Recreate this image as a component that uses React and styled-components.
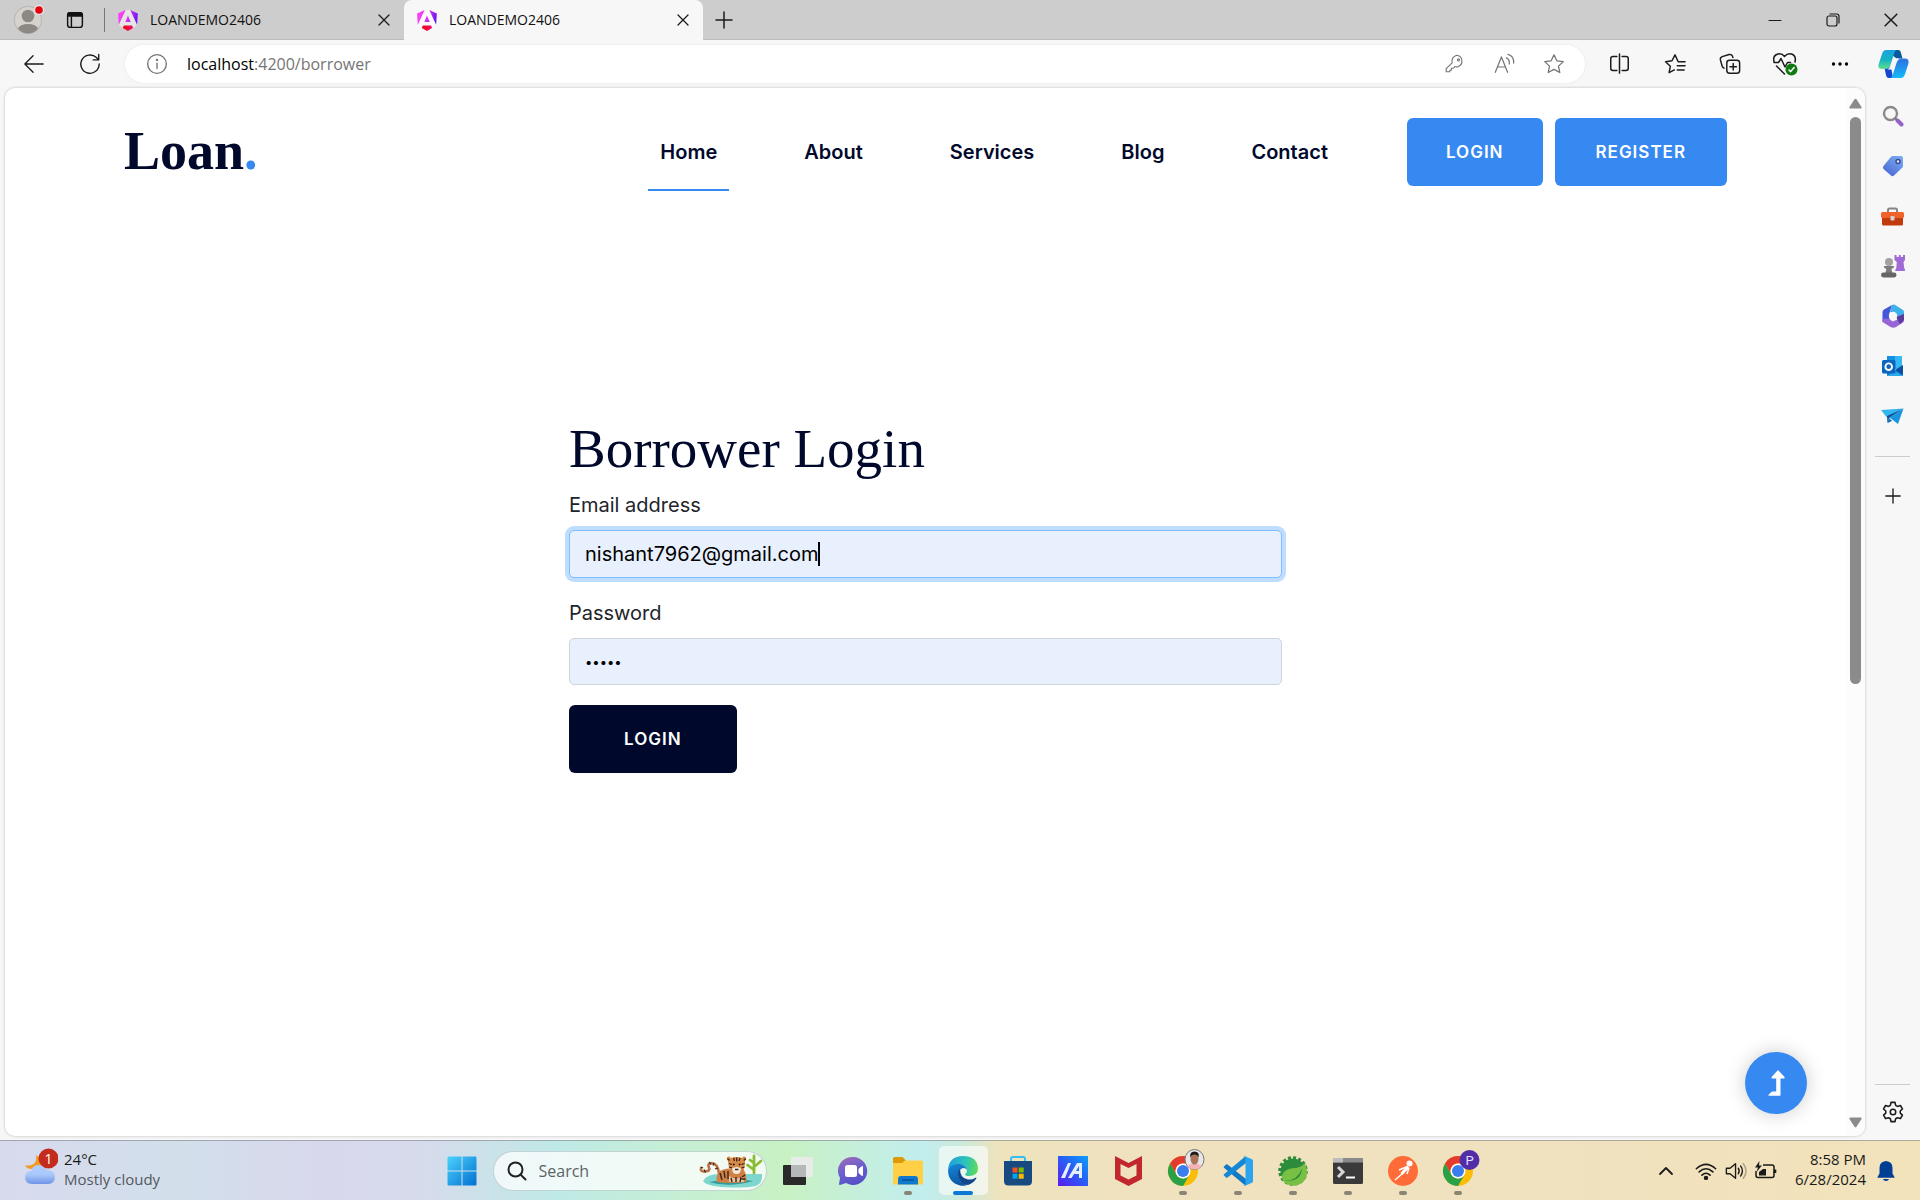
import React, { useState } from "react";
import styled, { createGlobalStyle, css } from "styled-components";

const uiFont = '"Open Sans", "Noto Sans", sans-serif';
const siteFont = 'Inter, "Liberation Sans", sans-serif';
const navy = "#00092b";
const blue = "#3789f2";

const GlobalStyle = createGlobalStyle`
  * { box-sizing: border-box; }
  body { margin: 0; background: #f7f7f7; font-family: ${uiFont}; }
  button { border: 0; padding: 0; background: none; font: inherit; color: inherit; cursor: pointer; }
  svg { display: block; flex: none; }
`;

const Desktop = styled.div`
  display: flex;
  flex-direction: column;
  height: 100vh;
  overflow: hidden;
`;

/* ---------- tab strip ---------- */
const TabStrip = styled.header`
  display: flex;
  height: 40px;
  background: #cdcdcd;
  box-shadow: inset 0 -1px 0 #bdbdbd;
`;
const StripTools = styled.div`
  display: flex;
  align-items: center;
  gap: 20px;
  width: 104px;
  padding-left: 14px;
`;
const Divider = styled.span`
  width: 1px;
  height: 24px;
  margin: 8px 0;
  background: #777;
`;
const Tab = styled.div`
  display: flex;
  align-items: center;
  gap: 12px;
  width: 299px;
  padding: 0 12px 0 13px;
  font-size: 14px;
  line-height: 20px;
  color: #111;
  border-radius: 8px 8px 0 0;
  background: ${(p) => (p.$active ? "#f7f7f7" : "transparent")};
`;
const TabTitle = styled.span`
  flex: 1;
`;
const IconButton = styled.button`
  display: flex;
  align-items: center;
  justify-content: center;
  width: ${(p) => p.$w || 40}px;
  height: ${(p) => p.$h || 40}px;
  color: ${(p) => p.$color || "#1b1b1b"};
`;
const WindowControls = styled.div`
  display: flex;
  margin-left: auto;
`;

/* ---------- toolbar ---------- */
const Toolbar = styled.div`
  display: flex;
  align-items: center;
  height: 47px;
  background: #f7f7f7;
`;
const NavButtons = styled.div`
  display: flex;
  width: 125px;
  padding-left: 6px;
`;
const AddressBar = styled.div`
  display: flex;
  flex: 1;
  align-items: center;
  height: 38px;
  padding: 0 6px 0 12px;
  background: #fff;
  border-radius: 19px;
  box-shadow: 0 0 3px rgba(0, 0, 0, 0.08);
`;
const Url = styled.div`
  flex: 1;
  padding-left: 10px;
  font-size: 16px;
  line-height: 24px;
  color: #757575;
  b { font-weight: 400; color: #000; }
`;
const ToolbarActions = styled.div`
  display: flex;
  padding-left: 7px;
`;

/* ---------- browser body ---------- */
const BrowserBody = styled.div`
  display: flex;
  flex: 1;
  min-height: 0;
  padding: 1px 0 4px 5px;
`;
const Viewport = styled.div`
  position: relative;
  display: flex;
  flex: 1;
  overflow: hidden;
  background: #fff;
  border-radius: 10px;
  box-shadow: 0 0 3px rgba(0, 0, 0, 0.25);
`;
const Page = styled.div`
  flex: 1;
  font-family: ${siteFont};
`;
const ScrollTrack = styled.div`
  display: flex;
  flex-direction: column;
  align-items: center;
  gap: 8px;
  width: 19px;
  padding: 10px 0 8px;
  background: #fcfcfc;
  svg:last-child { margin-top: auto; }
`;
const ScrollThumb = styled.div`
  width: 11px;
  height: 55%;
  border-radius: 6px;
  background: #8b8b8b;
`;
const EdgeSidebar = styled.aside`
  display: flex;
  flex-direction: column;
  align-items: center;
  width: 55px;
  padding-top: 3px;
`;
const SideRule = styled.hr`
  width: 35px;
  height: 1px;
  margin: ${(p) => p.$margin};
  border: 0;
  background: #ccc;
`;

/* ---------- site ---------- */
const SiteHeader = styled.header`
  display: flex;
  align-items: center;
  padding: 30px 119px;
`;
const Brand = styled.a`
  padding-bottom: 2px;
  font: 700 54px/60px "Liberation Serif", serif;
  color: ${navy};
  text-decoration: none;
  span { color: ${blue}; }
`;
const SiteNav = styled.nav`
  display: flex;
  gap: 63px;
  margin-left: auto;
  margin-right: 67px;
`;
const NavLink = styled.a`
  position: relative;
  padding: 0 12px;
  font-size: 20px;
  font-weight: 600;
  line-height: 68px;
  color: ${navy};
  text-decoration: none;
  ${(p) => p.$active && css`
    &::after {
      content: "";
      position: absolute;
      left: 0;
      right: 0;
      bottom: -5px;
      height: 2px;
      background: ${blue};
    }
  `}
`;
const SiteButton = styled.button`
  height: 68px;
  padding: 0 ${(p) => p.$pad}px;
  border-radius: 6px;
  background: ${(p) => (p.$dark ? navy : blue)};
  color: #fff;
  font-family: ${siteFont};
  font-size: 17px;
  font-weight: 600;
  letter-spacing: 1px;
`;
const HeaderActions = styled.div`
  display: flex;
  gap: 12px;
`;
const LoginForm = styled.form`
  display: flex;
  flex-direction: column;
  align-items: stretch;
  max-width: 713px;
  margin: 203px auto 0;
  ${SiteButton} { align-self: flex-start; }
`;
const Title = styled.h1`
  margin: 0 0 11px;
  font: 400 55px/60px "Liberation Serif", serif;
  color: ${navy};
`;
const Field = styled.div`
  position: relative;
  display: flex;
  flex-direction: column;
  gap: 10px;
  margin-bottom: 20px;
`;
const Label = styled.label`
  font-size: 20px;
  line-height: 30px;
  color: #212529;
`;
const Input = styled.input`
  height: ${(p) => (p.$focused ? 48 : 47)}px;
  padding: 0 15px;
  border: 1px solid ${(p) => (p.$focused ? "#80bdff" : "#ced4da")};
  border-radius: 5px;
  outline: 0;
  background: #e8f0fe;
  box-shadow: ${(p) => (p.$focused ? "0 0 0 4px #bfdeff" : "none")};
  font-family: ${siteFont};
  font-size: ${(p) => (p.type === "password" ? 13 : 20)}px;
  color: #000;
`;
const Caret = styled.span`
  position: absolute;
  left: 249px;
  bottom: 12px;
  width: 2px;
  height: 24px;
  background: #000;
`;
const ToTop = styled.button`
  position: absolute;
  right: 58px;
  bottom: 22px;
  display: grid;
  place-items: center;
  width: 62px;
  height: 62px;
  border-radius: 50%;
  background: ${blue};
  box-shadow: 0 0 20px rgba(0, 0, 0, 0.2);
`;

/* ---------- taskbar ---------- */
const TaskbarRoot = styled.footer`
  display: grid;
  grid-template-columns: 1fr auto 1fr;
  align-items: center;
  height: 60px;
  border-top: 1px solid rgba(120, 120, 130, 0.55);
  background: linear-gradient(90deg, #d7daed 0%, #d2dfeb 9%, #d8d8ec 17%, #d6dbec 22%, #bfe9e6 29%,
    #c6efd2 36%, #c8f1c4 41%, #c5efdc 45%, #c1eeee 48%, #cbe9dc 50%, #eee3bd 52%, #f0e1bf 60%, #f0e1bf 80%, #f3e3bb 100%);
`;
const Weather = styled.button`
  display: flex;
  align-items: center;
  gap: 6px;
  margin-left: 24px;
  justify-self: start;
  text-align: left;
`;
const WeatherText = styled.span`
  padding-bottom: 4px;
  font-size: 15px;
  line-height: 20px;
  color: #1a1a1a;
  small { display: block; font-size: 15px; color: #55585e; }
`;
const Apps = styled.div`
  display: flex;
  align-items: center;
`;
const AppButton = styled.button`
  position: relative;
  display: grid;
  place-items: center;
  width: 49px;
  height: 49px;
  margin: 0 3px;
  border-radius: 5px;
  background: ${(p) => (p.$active ? "rgba(255,255,255,0.6)" : "transparent")};
  ${(p) => p.$running && css`
    &::after {
      content: "";
      position: absolute;
      bottom: 0;
      width: ${p.$active ? 20 : 8}px;
      height: 4px;
      border-radius: 2px;
      background: ${p.$active ? "#0a78d4" : "#8a8474"};
    }
  `}
`;
const SearchPill = styled.label`
  display: flex;
  align-items: center;
  gap: 12px;
  width: 274px;
  height: 40px;
  margin: 0 4px 0 3px;
  padding: 0 3px 0 13px;
  border: 1px solid rgba(110, 140, 140, 0.35);
  border-radius: 20px;
  background: rgba(255, 255, 255, 0.75);
  overflow: hidden;
`;
const SearchInput = styled.input`
  flex: 1;
  min-width: 0;
  padding: 0;
  border: 0;
  outline: 0;
  background: none;
  font: 16px/24px ${uiFont};
  &::placeholder { color: #5c6264; opacity: 1; }
`;
const Tray = styled.div`
  display: flex;
  align-items: center;
  justify-self: end;
  padding-right: 24px;
`;
const Clock = styled.time`
  width: 83px;
  margin: 0 10px 0 2px;
  padding-bottom: 4px;
  font-size: 15px;
  line-height: 20px;
  text-align: right;
  color: #1a1a1a;
`;

/* ---------- icons ---------- */
const Line = ({ size = 22, w = 1.5, vb = 24, children, ...rest }) => (
  <svg width={size} height={size} viewBox={`0 0 ${vb} ${vb}`} fill="none" stroke="currentColor"
    strokeWidth={w} strokeLinecap="round" strokeLinejoin="round" {...rest}>{children}</svg>
);

const AvatarIcon = () => (
  <svg width="32" height="32" viewBox="0 0 32 32">
    <circle cx="14" cy="16" r="14" fill="#b9b6b2" />
    <circle cx="14" cy="16" r="13" fill="#d6d3ce" />
    <circle cx="14" cy="12" r="6.300" fill="#8c8883" />
    <path d="M4 24.500Q6 20 14 20t10 4.500q-4 5-10 5t-10-5" fill="#8c8883" />
    <circle cx="25" cy="6" r="5" fill="#e8e8e8" />
    <circle cx="25" cy="6" r="3.800" fill="#e3000f" />
  </svg>
);
const WorkspacesIcon = () => (
  <svg width="18" height="18" viewBox="0 0 20 20" fill="none" stroke="#111" strokeWidth="1.6">
    <rect x="1.800" y="1.800" width="16.400" height="16.400" rx="3" />
    <path d="M2 4q0-2 2.500-2h11q2.500 0 2.500 2v1.500H2z" fill="#111" />
    <path d="M6 6v12" />
  </svg>
);
const AngularIcon = () => (
  <svg width="20" height="21" viewBox="0 0 223 236">
    <defs>
      <linearGradient id="ngA" x1="0" y1=".3" x2="1" y2=".5">
        <stop offset="0" stopColor="#ff41f8" /><stop offset=".5" stopColor="#e035f0" /><stop offset="1" stopColor="#6a14f5" />
      </linearGradient>
      <linearGradient id="ngB" x1="0" y1="0" x2="1" y2="0">
        <stop offset="0" stopColor="#f0060b" /><stop offset="1" stopColor="#f50a70" />
      </linearGradient>
    </defs>
    <path fill="#fff" opacity=".5" d="M84 0h54l77 165-46 37-58 33-58-33-45-37z" />
    <path fill="url(#ngA)" d="m222 39-8 126L137 0zM111 63l30 73H81zM8 165 0 39 85 0z" />
    <path fill="url(#ngB)" d="m169 202-58 33-58-33 12-29h92z" />
  </svg>
);
const CloseIcon = ({ size = 12 }) => <Line size={size} vb={12} w={1.3}><path d="M1 1l10 10M11 1L1 11" /></Line>;
const PlusIcon = ({ size = 18 }) => <Line size={size} vb={18} w={1.5}><path d="M9 1v16M1 9h16" /></Line>;
const MinIcon = () => <Line size={14} vb={14} w={1}><path d="M1 7.500h12" /></Line>;
const RestoreIcon = () => (
  <Line size={14} vb={14} w={1.2}><rect x="1" y="3" width="10" height="10" rx="2" /><path d="M4 1h6.500q2.500 0 2.500 2.500V10" /></Line>
);
const BackIcon = () => <Line w={1.4}><path d="M22 12H2.500M11 3l-9 9 9 9" /></Line>;
const RefreshIcon = () => <Line w={1.5}><path d="M22 12a10 10 0 1 1-3-7L21.500 7.500M21.500 1.500v6h-6" /></Line>;
const InfoIcon = () => <Line w={1.5}><circle cx="12" cy="12" r="10.200" /><path d="M12 11v6" /><circle cx="12" cy="7.500" r=".6" fill="currentColor" /></Line>;
const KeyIcon = () => (
  <Line size={19} w={1.4}><path d="M14.500 1.500a7.500 7.500 0 0 1 2 14.500q-2 .7-4-.2L10.500 18H8v2.500H6V22.500H1.500V18.500L9 11.200q-1.500-7 5.500-9.700z" /><circle cx="17" cy="7.500" r="1.300" /></Line>
);
const ReadAloudIcon = () => (
  <Line size={21} w={1.4}><path d="M1.500 22L8.500 4.500 15.500 22M4 16h9M14 5.500q4 1.500 3.500 7M16 1.500q7 2 6.500 10" /></Line>
);
const StarIcon = () => <Line size={22} w={1.4}><path d="M12 2l3.100 6.500 7 .9-5.200 4.900 1.400 7L12 17.900l-6.300 3.400 1.400-7L1.900 9.400l7-.9z" /></Line>;
const SplitIcon = () => <Line w={1.7} size={21}><path d="M9 4H4.500Q2 4 2 6.500v11Q2 20 4.500 20H9M15 4h4.500Q22 4 22 6.500v11q0 2.500-2.500 2.500H15M12 1v22" /></Line>;
const FavoritesIcon = () => <Line w={1.6}><path d="M15.500 9.500L12 2 8.700 8.500l-7 1 5.200 5-1.300 7 5.700-3M14.500 14H23M14.500 18.500H22M15.500 9.500H23" /></Line>;
const CollectionsIcon = () => (
  <Line w={1.6}><rect x="8.500" y="8" width="14" height="14" rx="3" /><path d="M15.500 11.500v7M12 15h7M5.500 16.500Q4 16 3.500 14.500L1.500 7.500Q1 5 3.500 4L11 1.700q2.500-.7 3.500 1.300l.7 2" /></Line>
);
const HealthIcon = () => (
  <svg width="26" height="26" viewBox="0 0 26 26" fill="none" stroke="#1b1b1b" strokeWidth="1.5" strokeLinejoin="round" strokeLinecap="round">
    <path d="M2 10.500Q.5 4.500 6 3q4-.8 6.500 2.500Q15.500 2 19.500 3q5 1.500 3.500 8M4.500 15l8 8M2 11.500h4.500L9 7.500l4 8.500 2.500-4.500h3" />
    <circle cx="19.500" cy="18.500" r="6" fill="#0f7b10" stroke="none" />
    <path d="M17 19l1.700 1.600 3.400-4" stroke="#fff" />
  </svg>
);
const DotsIcon = () => (
  <svg width="18" height="6" viewBox="0 0 18 6"><circle cx="2.500" cy="3" r="1.700" /><circle cx="9" cy="3" r="1.700" /><circle cx="15.500" cy="3" r="1.700" /></svg>
);
const CopilotIcon = () => (
  <svg width="31" height="30" viewBox="0 0 31 30">
    <defs>
      <linearGradient id="cpA" x1="0" y1="0" x2="0" y2="1"><stop offset="0" stopColor="#1aa3e0" /><stop offset=".5" stopColor="#15b2c4" /><stop offset="1" stopColor="#5fe08a" /></linearGradient>
      <linearGradient id="cpB" x1="0" y1="0" x2="0" y2="1"><stop offset="0" stopColor="#2f6fe0" /><stop offset="1" stopColor="#12baf8" /></linearGradient>
    </defs>
    <path d="M16 1h4q2.500 0 3 3l1.500 5.500h-6L14 6z" fill="#0a5a9c" />
    <path d="M8 1h11q-2 0-3 4l-3.500 11q-1.500 4-5 4H4Q-.8 20 .7 15L4 5Q5.300 1 8 1z" fill="url(#cpA)" />
    <path d="M15 29h-4q-2.500 0-3-3l-1.300-6q4.300 0 6-4z" fill="#1747d1" />
    <path d="M23 29H12q2 0 3-4l3.500-11q1.500-4.500 5-4.500H27q4.500 0 3.300 5.500L27 25q-1.300 4-4 4z" fill="url(#cpB)" />
    <path d="M15.500 10.500q.5-1 1.500-1h4q-2.500 1-3.500 4l-1.800 5.500q-.7 1.500-2 1.500H9.500q2-1 3-4z" fill="#f7f7f7" />
  </svg>
);
const SideSearch = () => (
  <svg width="22" height="22" viewBox="0 0 22 22" fill="none"><circle cx="8.500" cy="8.500" r="6.500" stroke="#8a8a8a" strokeWidth="2.400" /><path d="M13 13l2 2" stroke="#777" strokeWidth="2" /><path d="M15.500 15.500l4 4" stroke="#9462c9" strokeWidth="4" strokeLinecap="round" /></svg>
);
const TagIcon = () => (
  <svg width="22" height="22" viewBox="0 0 22 22"><defs><linearGradient id="tg" x1="1" y1="0" x2=".3" y2="1"><stop stopColor="#7fb0f5" /><stop offset="1" stopColor="#4a6bd4" /></linearGradient></defs>
    <path d="M11 1h8q2 0 2 2v8q0 1-.8 1.800L12 20.500q-1.500 1.300-3 0L1.500 14q-1.300-1.500 0-3L9 1.800Q10 1 11 1z" fill="url(#tg)" /><circle cx="16" cy="6.500" r="2" fill="#dfe9ff" stroke="#3a4a94" strokeWidth="1.500" /></svg>
);
const ToolboxIcon = () => (
  <svg width="23" height="19" viewBox="0 0 23 19"><path d="M7 6V3q0-1.500 1.500-1.500h6Q16 1.500 16 3v3" fill="none" stroke="#858585" strokeWidth="2" /><rect x="1" y="9" width="21" height="9.500" rx="1.500" fill="#c23b0c" /><rect x="0" y="5" width="23" height="6" rx="1.500" fill="#f0622a" /><rect x="9.500" y="9" width="4" height="4.500" rx="1.200" fill="#d3d3d3" /></svg>
);
const GamesIcon = () => (
  <svg width="24" height="24" viewBox="0 0 24 24"><path d="M13.500 1h2v2h2.300V1h2v2h2.200V1H24v5l-1.500 2 .7 6q.8.500.8 3h-9.700q0-2.500 1-3l.5-6-2.300-2z" fill="#a06bd6" /><circle cx="8" cy="8" r="4" fill="#a2a2a2" /><path d="M3 12h10v1.500L10.500 15l.8 4H4.500l.8-4L3 13.500z" fill="#7d7d7d" /><rect x="0" y="18.500" width="15.500" height="5" rx="2.400" fill="#666" /></svg>
);
const OfficeIcon = () => (
  <svg width="22" height="24" viewBox="0 0 22 24"><path d="M10 1Q12 0 14 1.500L21 6q1 .7 1 2v8L14.500 13V9.500L8 8z" fill="#3fb1ea" /><path d="M10 1L2 5.500Q.5 6.500.5 8v10l7-3V9z" fill="#4359d8" /><path d="M.5 15v3l8 5q3 1.500 5.500 0l7-4.500q1-.8 1-2.500v-4l-7.500 4-4 1.500L7 14.500z" fill="#9765d5" /><path d="M14 13l8-3v6l-4 4z" fill="#5a3b9c" /><circle cx="11" cy="12" r="4.200" fill="#f7f7f7" /></svg>
);
const OutlookIcon = () => (
  <svg width="22" height="22" viewBox="0 0 22 22"><rect x="5" y="1" width="15" height="13" rx="1" fill="#35b8f1" /><path d="M5 1h8v6H5z" fill="#1591df" /><path d="M5 12l8 4 8-5v9q0 1-1 1H6q-1 0-1-1z" fill="#1479cd" /><path d="M13 15l8-5v10z" fill="#0a4fa0" /><path d="M5 21l8-5 8 5z" fill="#27a9ea" /><rect x="0" y="5" width="13.500" height="13.500" rx="1.500" fill="#0a66c0" /><circle cx="6.700" cy="11.700" r="3.300" fill="none" stroke="#fff" strokeWidth="1.900" /></svg>
);
const TelegramIcon = () => (
  <svg width="23" height="17" viewBox="0 0 23 17"><path d="M0 2L22.500.5 5.500 9z" fill="#35b5ee" /><path d="M6 8L22.500.5 8 10l-1.500 5z" fill="#0b4f94" /><path d="M8.500 9.500L22.500.5 17 16z" fill="#1995e0" /><path d="M6.500 15L8 10l3 3z" fill="#0e6bb8" /></svg>
);
const GearIcon = () => (
  <Line size={22} w={1.7}><path d="M9.800 1.500h4.400l.7 3.200 2 1.200 3.200-1 2.200 3.800-2.400 2.200v2.300l2.400 2.200-2.200 3.800-3.200-1-2 1.200-.7 3.100H9.800l-.7-3.100-2-1.200-3.200 1-2.200-3.800 2.400-2.200v-2.300L1.700 8.700l2.200-3.800 3.200 1 2-1.200z" /><circle cx="12" cy="12" r="3" /></Line>
);
const Triangle = ({ down }) => (
  <svg width="13" height="11" viewBox="0 0 13 11"><path d={down ? "M1 .5h11q1 .5.500 1.500L7.500 9.800q-1 1-2 0L.5 2Q0 1 1 .5z" : "M1 10.500h11q1-.5.500-1.500L7.500 1.200q-1-1-2 0L.5 9q-.5 1 .5 1.500z"} fill="#8b8b8b" /></svg>
);
const LevelUpIcon = () => (
  <svg width="17" height="26" viewBox="0 0 17 26" fill="#fff"><path d="M9.500.5q.5-.6 1 0l6 6.500q.7 1.500-.8 1.500h-3.200V25q0 .7-.7.7H1Q0 25.500.7 24.600L3.500 22q.4-.5 1-.5h3.700v-13H4.500Q3 8.500 3.700 7z" /></svg>
);
const WeatherIcon = () => (
  <svg width="34" height="46" viewBox="0 0 34 46">
    <defs><linearGradient id="wc" x1="0" y1="0" x2="0" y2="1"><stop stopColor="#b5cdfa" /><stop offset=".5" stopColor="#a9c8fb" /><stop offset="1" stopColor="#6f94e6" /></linearGradient></defs>
    <path d="M12 7q8 4 4 14H8Q3 21 1 17.500q13 1 11-10.500z" fill="#f29b24" />
    <path d="M8 36Q1 35.500 1 29.500T7.500 23Q8 17 15 17q6 0 8 5 8 .5 8 7t-7 7z" fill="url(#wc)" />
    <circle cx="24.500" cy="10.500" r="10" fill="#c42b1c" />
    <text x="24.500" y="15.500" textAnchor="middle" fontSize="14" fill="#fff" fontFamily="Open Sans, sans-serif">1</text>
  </svg>
);
const StartIcon = () => (
  <svg width="30" height="30" viewBox="0 0 30 30"><defs><linearGradient id="st" x1="0" y1="0" x2="1" y2="1"><stop stopColor="#4cd2fd" /><stop offset="1" stopColor="#0070d0" /></linearGradient></defs>
    <path d="M1.500.5h13v14H.5v-13q0-1 1-1zM15.500.5h13q1 0 1 1v13h-14zM.5 15.500h14v14h-13q-1 0-1-1zM15.500 15.500h14v13q0 1-1 1h-13z" fill="url(#st)" /></svg>
);
const TaskSearchIcon = () => <svg width="20" height="20" viewBox="0 0 20 20" fill="none" stroke="#222" strokeWidth="2"><circle cx="8.500" cy="8.500" r="7" /><path d="M13.500 13.500l5 5" strokeLinecap="round" /></svg>;
const TigerArt = () => (
  <svg width="64" height="34" viewBox="0 0 64 34">
    <path d="M4 27q4-7 16-7h43q1 9-6 12-10 2-24 1.500Q8 33 4 27z" fill="#7ed6cf" />
    <path d="M10 28q20 6 44-1-20-4-44 1z" fill="#2f9a9c" />
    <path d="M20 20q-1-11-8-11-4 1-2 4.500t-4 4q-5 .5-4-3.500" fill="none" stroke="#bd7044" strokeWidth="2.600" strokeLinecap="round" />
    <path d="M10 8l2 2.500M5 15.500l1.500 3M15 9l-1 2.500M19 14l-3 1M2 13l2 1" stroke="#3b2418" strokeWidth="1.200" />
    <path d="M17.500 28q-1-11 7-12.500 7-1.500 11-1.500h8q4 4 4 14-15 2-30 0z" fill="#cf8145" />
    <path d="M30 22q7 5 14 0l1 6H30z" fill="#e6c3a0" />
    <path d="M21 19l2 7M25 17l1 7M29 17v8M32 24l1 4M37 23v5M42 23l-1 5M46 21l-3 2M46.500 25h-4" stroke="#3b2418" strokeWidth="1.400" />
    <path d="M28 3.500q2-2 4 .5l3-1h5l3 1q2-2.500 4-.5.800 2-1 3.500.5 7-3 10.500l-5 3-5-3q-4-3-4-10.500-1.800-1.500-1-3.500z" fill="#d98b4a" />
    <path d="M33 14.500q4.500-3 9 0l-1 4q-3.500 3-7 0z" fill="#f3e9df" />
    <path d="M30 9.500l3 1M30 13l3 1M45.500 9.500l-3 1M45.500 13l-3 1M37.700 3.500v4M34.500 4l1 3M41 4l-1 3M28.500 4.500l2 2M46.800 4.500l-2 2M36 15.500h3.400" stroke="#3b2418" strokeWidth="1.300" />
    <circle cx="34.800" cy="10.500" r="1" fill="#1c1c1c" /><circle cx="40.600" cy="10.500" r="1" fill="#1c1c1c" />
    <path d="M55 19V2M54.500 15.500L48.500 11M55 13l7-6M55 9l-4-3" fill="none" stroke="#8cbc35" strokeWidth="2.800" strokeLinecap="round" />
  </svg>
);
const TaskViewIcon = () => (
  <svg width="30" height="28" viewBox="0 0 30 28"><rect x="0" y="8" width="23" height="20" rx="1" fill="#292929" /><rect x="8" y="0" width="22" height="20" rx="1" fill="#e9ecec" opacity=".92" /><rect x="8" y="8" width="15" height="12" fill="#b5b8b8" /></svg>
);
const ChatIcon = () => (
  <svg width="30" height="30" viewBox="0 0 30 30"><defs><linearGradient id="ch" x1=".2" y1="0" x2=".6" y2="1"><stop stopColor="#9c6bb5" /><stop offset=".5" stopColor="#6a5fd0" /><stop offset="1" stopColor="#5350c4" /></linearGradient></defs>
    <path d="M15 1a14 14 0 1 1-7 26l-6 2q-1 0-1-1l1-6A14 14 0 0 1 15 1z" fill="url(#ch)" /><rect x="7" y="9" width="12" height="12" rx="2.500" fill="#fff" /><path d="M20.500 13l3.500-3q1 0 1 1v8q0 1-1 1l-3.500-3z" fill="#fff" /></svg>
);
const FolderIcon = () => (
  <svg width="30" height="28" viewBox="0 0 30 28"><path d="M0 1.500Q0 0 1.500 0h8L13 3.500 9.500 8H0z" fill="#dc9a06" /><path d="M12 3.500h16.500q1.500 0 1.500 1.500v21q0 1.500-1.500 1.500h-27Q0 27.500 0 26V6h9z" fill="#ffcf45" /><path d="M5 27.500V22q0-3 3-3h14q3 0 3 3v5.500z" fill="#0d7ad0" /><path d="M9 23h12" stroke="#0a4f96" strokeWidth="1.500" /></svg>
);
const EdgeIcon = () => (
  <svg width="30" height="30" viewBox="0 0 30 30">
    <defs>
      <linearGradient id="edA" x1="0" y1=".3" x2="1" y2=".4"><stop stopColor="#1e9de0" /><stop offset=".6" stopColor="#2cc4b8" /><stop offset="1" stopColor="#5edb57" /></linearGradient>
      <linearGradient id="edB" x1="0" y1="0" x2=".3" y2="1"><stop stopColor="#1787d8" /><stop offset="1" stopColor="#0c59a6" /></linearGradient>
    </defs>
    <path d="M0 14Q1 0 15 0q14 0 15 12 0 8-9 8-4 0-4-2 2-1 2-4-1-5-7-5Q4 8 0 14z" fill="url(#edA)" />
    <path d="M0 14Q3 7.500 11 8q7 1 8 6-1-2-4-2-5 2-4.500 8Q12 28 19 29q-3 1.200-6 .7Q0 27 0 14z" fill="url(#edB)" />
    <path d="M12 13q-2.500 2-2 6.500Q12 29 20 29q6-2 8.500-7-.2-.8-1-.3Q24 24 20 23.500 12 22.500 12 13z" fill="#12478c" />
  </svg>
);
const StoreIcon = () => (
  <svg width="30" height="30" viewBox="0 0 30 30"><path d="M8 6V3q0-2 2-2h10q2 0 2 2v3" fill="none" stroke="#35bdf2" strokeWidth="2" /><path d="M1 5h28v20q0 4.500-4.500 4.500h-19Q1 29.500 1 25z" fill="#164a80" /><path d="M9.500 11.500h5v5h-5z" fill="#f25022" /><path d="M15.700 11.500h5v5h-5z" fill="#7fba00" /><path d="M9.500 17.700h5v5h-5z" fill="#00a4ef" /><path d="M15.700 17.700h5v5h-5z" fill="#ffb900" /></svg>
);
const MyAsusIcon = () => (
  <svg width="30" height="30" viewBox="0 0 30 30"><defs><linearGradient id="as" x1="1" y1="0" x2="0" y2="1"><stop stopColor="#0aa0fa" /><stop offset=".5" stopColor="#2b5af5" /><stop offset="1" stopColor="#5a1cf0" /></linearGradient></defs>
    <rect width="30" height="30" fill="url(#as)" /><path d="M3 22L10 7h3L7 22zM10 22L19 7h5v15h-3v-4h-5l-2.500 4zM18 15h3v-5z" fill="#e6efff" fillRule="evenodd" /></svg>
);
const McAfeeIcon = () => <svg width="27" height="30" viewBox="0 0 27 30"><path d="M0 0l13.500 7L27 0v23l-13.500 7L0 23zM5.500 8v11.500l8 4 8-4V8l-8 4z" fill="#c1272d" fillRule="evenodd" /></svg>;
const ChromeIcon = ({ children }) => (
  <svg width="44" height="44" viewBox="-7 0 44 44">
    <circle cx="15" cy="22" r="15" fill="#fbbd05" />
    <path d="M2 14.500A15 15 0 0 1 28 14.500H15A7.500 7.500 0 0 0 8.500 25.800z" fill="#e33b2e" />
    <path d="M2 14.500l6.500 11.300A7.500 7.500 0 0 0 21.500 25.800L15 37A15 15 0 0 1 2 14.500z" fill="#2aa147" />
    <circle cx="15" cy="22" r="7.500" fill="#fff" /><circle cx="15" cy="22" r="6" fill="#3a7dee" />
    {children}
  </svg>
);
const FaceBadge = () => (
  <g><ellipse cx="26.500" cy="10.500" rx="9.500" ry="10" fill="#e7e7ea" stroke="#777" /><path d="M19.500 17.500q2-3 7-3t7 3q-3 3-7 3t-7-3z" fill="#f4b3b8" /><ellipse cx="26.500" cy="10" rx="4" ry="5.500" fill="#a9745a" /><path d="M22.300 8.500q-1-6 4.200-6t4.200 6q-1.200-3-4.200-3t-4.200 3z" fill="#1e1a1a" /></g>
);
const LetterBadge = () => (
  <g><circle cx="26.500" cy="11" r="10" fill="#512da8" /><text x="26.500" y="15.500" textAnchor="middle" fontSize="13" fontFamily="Roboto, sans-serif" fill="#e9ddff">P</text></g>
);
const VsCodeIcon = () => (
  <svg width="30" height="30" viewBox="0 0 30 30"><path d="M1 10.500l2-2q.8-.5 1.500 0L23 23v6q-1 .5-2-.5L1 11.800q-.7-.6 0-1.300z" fill="#1479c4" /><path d="M1 19.500l2 2q.8.5 1.500 0L23 7V1q-1-.5-2 .5L1 18.200q-.7.600 0 1.300z" fill="#1488d4" /><path d="M22 .3l7 3q1 .5 1 1.700v20q0 1.200-1 1.700l-7 3q-1 0-1.500-.8L22.500 28V2l-2-1q.5-.8 1.500-.7z" fill="#2ba4f0" /></svg>
);
const SpringIcon = () => (
  <svg width="30" height="30" viewBox="0 0 30 30"><circle cx="15" cy="15" r="12.500" fill="#2c8c3c" /><circle cx="15" cy="15" r="13.300" fill="none" stroke="#2c8c3c" strokeWidth="3" strokeDasharray="3 2.200" /><path d="M27 7q5 12-2 19-9 7-18 1Q1 21 6 16q4-4 12-4 6-1 9-5z" fill="#77c043" /><path d="M6 24.500q13 1 18-12-1 14-18 12z" fill="#2c8c3c" /></svg>
);
const TerminalIcon = () => (
  <svg width="30" height="26" viewBox="0 0 30 26"><rect width="30" height="26" rx="1.500" fill="#3a3a3a" /><path d="M1.500 0h27Q30 0 30 1.500V4.500H0V1.500Q0 0 1.500 0z" fill="#8a8a8a" /><path d="M0 0h10v4.500H0z" fill="#bdbdbd" /><path d="M5 9l5 5-5 5" fill="none" stroke="#d6d6d6" strokeWidth="3" /><path d="M13 19.500h9" stroke="#fff" strokeWidth="2" /></svg>
);
const PostmanIcon = () => (
  <svg width="30" height="30" viewBox="0 0 30 30"><circle cx="15" cy="15" r="15" fill="#ff6c37" /><circle cx="21.500" cy="7.500" r="3" fill="#fff" /><path d="M19 9.500l2.500 2.500-7 7-2-2z" fill="#fff" /><path d="M18 11L11 14M14 18l-7 6M21 12l-2 6" stroke="#fff" strokeWidth="1.400" /></svg>
);
const ChevronUp = () => <Line size={16} vb={16} w={1.800}><path d="M2 11l6-6 6 6" /></Line>;
const WifiIcon = () => (
  <Line size={22} w={1.700}><path d="M1.500 9.500Q12 0 22.500 9.500M4.500 13q7.500-7 15 0M7.500 16.500q4.500-4 9 0" /><circle cx="12" cy="19.500" r="1.600" fill="currentColor" /></Line>
);
const VolumeIcon = () => (
  <Line size={22} w={1.500}><path d="M1.500 9v6h4l6 5V4l-6 5zM14.500 9q2 3 0 6M17 6.500q4 5.500 0 11" /><path d="M20 4q6 8 0 16" opacity=".35" /></Line>
);
const BatteryIcon = () => (
  <svg width="22" height="20" viewBox="0 0 22 20" fill="none" stroke="#1a1a1a" strokeWidth="1.500"><path d="M8 4h9q2 0 2 2v8.500q0 2-2 2H3q-2 0-2-2V10" /><path d="M20 8.500v3.500" strokeWidth="2.600" /><path d="M4 14.500V11l4-3h3v6.500z" fill="#1a1a1a" stroke="none" /><path d="M4.500 0L0 6.500h3L1.500 11 7 4.500H4z" fill="#1a1a1a" stroke="none" /></svg>
);
const BellIcon = () => (
  <svg width="18" height="20" viewBox="0 0 18 20" fill="#003f94"><path d="M9 0q6.500.5 6.500 7v5.500L17.500 16v.8H.5V16l2-3.500V7Q2.500.5 9 0zM6 18h6q-.5 2-3 2t-3-2z" /></svg>
);

const tabs = [{ id: 1, active: false }, { id: 2, active: true }];
const navItems = ["Home", "About", "Services", "Blog", "Contact"];
const sideApps = [
  ["Search", SideSearch], ["Shopping", TagIcon], ["Tools", ToolboxIcon], ["Games", GamesIcon],
  ["Microsoft 365", OfficeIcon], ["Outlook", OutlookIcon], ["Telegram", TelegramIcon],
];
const taskApps = [
  { name: "Task view", icon: <TaskViewIcon /> },
  { name: "Chat", icon: <ChatIcon /> },
  { name: "File Explorer", icon: <FolderIcon />, running: true },
  { name: "Edge", icon: <EdgeIcon />, running: true, active: true },
  { name: "Store", icon: <StoreIcon /> },
  { name: "MyASUS", icon: <MyAsusIcon /> },
  { name: "McAfee", icon: <McAfeeIcon /> },
  { name: "Chrome", icon: <ChromeIcon><FaceBadge /></ChromeIcon>, running: true },
  { name: "Visual Studio Code", icon: <VsCodeIcon />, running: true },
  { name: "Spring Tools", icon: <SpringIcon />, running: true },
  { name: "Terminal", icon: <TerminalIcon />, running: true },
  { name: "Postman", icon: <PostmanIcon />, running: true },
  { name: "Chrome profile", icon: <ChromeIcon><LetterBadge /></ChromeIcon>, running: true },
];

function BrowserChrome() {
  return (
    <>
      <TabStrip>
        <StripTools><AvatarIcon /><WorkspacesIcon /></StripTools>
        <Divider />
        {tabs.map((t) => (
          <Tab key={t.id} $active={t.active}>
            <AngularIcon />
            <TabTitle>LOANDEMO2406</TabTitle>
            <IconButton $w={16} aria-label="Close tab"><CloseIcon /></IconButton>
          </Tab>
        ))}
        <IconButton $w={42} aria-label="New tab"><PlusIcon /></IconButton>
        <WindowControls>
          <IconButton $w={58} aria-label="Minimize"><MinIcon /></IconButton>
          <IconButton $w={58} aria-label="Restore"><RestoreIcon /></IconButton>
          <IconButton $w={58} aria-label="Close"><CloseIcon size={14} /></IconButton>
        </WindowControls>
      </TabStrip>
      <Toolbar>
        <NavButtons>
          <IconButton $w={56} aria-label="Back"><BackIcon /></IconButton>
          <IconButton $w={56} aria-label="Refresh"><RefreshIcon /></IconButton>
        </NavButtons>
        <AddressBar>
          <IconButton $w={40} $h={38} $color="#757575" aria-label="Site information"><InfoIcon /></IconButton>
          <Url><b>localhost</b>:4200/borrower</Url>
          <IconButton $w={50} $h={38} $color="#757575" aria-label="Password"><KeyIcon /></IconButton>
          <IconButton $w={50} $h={38} $color="#757575" aria-label="Read aloud"><ReadAloudIcon /></IconButton>
          <IconButton $w={50} $h={38} $color="#757575" aria-label="Favorite"><StarIcon /></IconButton>
        </AddressBar>
        <ToolbarActions>
          <IconButton $w={55} aria-label="Split screen"><SplitIcon /></IconButton>
          <IconButton $w={55} aria-label="Favorites"><FavoritesIcon /></IconButton>
          <IconButton $w={55} aria-label="Collections"><CollectionsIcon /></IconButton>
          <IconButton $w={55} aria-label="Browser essentials"><HealthIcon /></IconButton>
          <IconButton $w={55} aria-label="Settings and more"><DotsIcon /></IconButton>
          <IconButton $w={53} aria-label="Copilot"><CopilotIcon /></IconButton>
        </ToolbarActions>
      </Toolbar>
    </>
  );
}

function LoanPage() {
  const [email, setEmail] = useState("nishant7962@gmail.com");
  const [password, setPassword] = useState("12345");
  return (
    <Page>
      <SiteHeader>
        <Brand href="#home">Loan<span>.</span></Brand>
        <SiteNav>
          {navItems.map((n) => <NavLink key={n} href={`#${n.toLowerCase()}`} $active={n === "Home"}>{n}</NavLink>)}
        </SiteNav>
        <HeaderActions>
          <SiteButton $pad={39}>LOGIN</SiteButton>
          <SiteButton $pad={41}>REGISTER</SiteButton>
        </HeaderActions>
      </SiteHeader>
      <LoginForm onSubmit={(e) => e.preventDefault()}>
        <Title>Borrower Login</Title>
        <Field>
          <Label htmlFor="email">Email address</Label>
          <Input id="email" type="email" $focused value={email} onChange={(e) => setEmail(e.target.value)} />
          <Caret />
        </Field>
        <Field>
          <Label htmlFor="password">Password</Label>
          <Input id="password" type="password" value={password} onChange={(e) => setPassword(e.target.value)} />
        </Field>
        <SiteButton $dark $pad={55} type="submit">LOGIN</SiteButton>
      </LoginForm>
    </Page>
  );
}

function Taskbar() {
  return (
    <TaskbarRoot>
      <Weather>
        <WeatherIcon />
        <WeatherText>24°C<small>Mostly cloudy</small></WeatherText>
      </Weather>
      <Apps>
        <AppButton aria-label="Start"><StartIcon /></AppButton>
        <SearchPill>
          <TaskSearchIcon />
          <SearchInput placeholder="Search" aria-label="Search" />
          <TigerArt />
        </SearchPill>
        {taskApps.map((a) => (
          <AppButton key={a.name} aria-label={a.name} $running={a.running} $active={a.active}>{a.icon}</AppButton>
        ))}
      </Apps>
      <Tray>
        <IconButton $w={50} aria-label="Hidden icons"><ChevronUp /></IconButton>
        <IconButton $w={30} aria-label="Network"><WifiIcon /></IconButton>
        <IconButton $w={30} aria-label="Volume"><VolumeIcon /></IconButton>
        <IconButton $w={30} aria-label="Battery"><BatteryIcon /></IconButton>
        <Clock>8:58 PM<br />6/28/2024</Clock>
        <IconButton $w={20} aria-label="Notifications"><BellIcon /></IconButton>
      </Tray>
    </TaskbarRoot>
  );
}

export default function App() {
  return (
    <Desktop>
      <GlobalStyle />
      <BrowserChrome />
      <BrowserBody>
        <Viewport>
          <LoanPage />
          <ScrollTrack>
            <Triangle />
            <ScrollThumb />
            <Triangle down />
          </ScrollTrack>
          <ToTop aria-label="Back to top"><LevelUpIcon /></ToTop>
        </Viewport>
        <EdgeSidebar>
          {sideApps.map(([name, Icon]) => (
            <IconButton key={name} $w={50} $h={50} aria-label={name}><Icon /></IconButton>
          ))}
          <SideRule $margin="15px 0" />
          <IconButton $w={50} $h={48} aria-label="Customize"><PlusIcon size={16} /></IconButton>
          <SideRule $margin="auto 0 3px" />
          <IconButton $w={50} $h={48} aria-label="Settings"><GearIcon /></IconButton>
        </EdgeSidebar>
      </BrowserBody>
      <Taskbar />
    </Desktop>
  );
}
